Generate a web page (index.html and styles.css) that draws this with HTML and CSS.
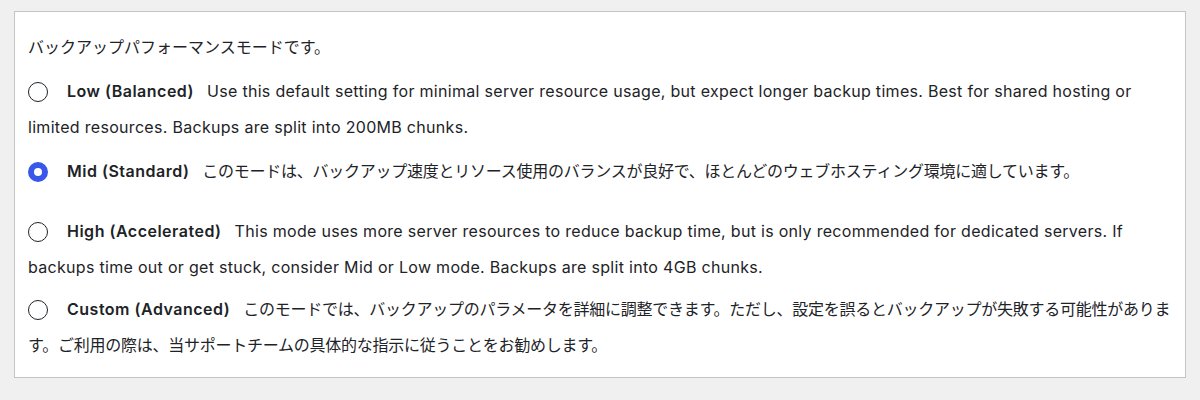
FILE: index.html
```html
<!DOCTYPE html>
<html lang="ja">
<head>
<meta charset="utf-8">
<link rel="stylesheet" href="styles.css">
</head>
<body>
<div class="panel">
  <p class="intro">バックアップパフォーマンスモードです。</p>
  <label class="opt en"><input type="radio" name="mode" class="radio"><strong class="name">Low (Balanced)</strong>Use this default setting for minimal server resource usage, but expect longer backup times. Best for shared hosting or limited resources. Backups are split into 200MB chunks.</label>
  <label class="opt ja opt-spaced"><input type="radio" name="mode" class="radio" checked><strong class="name">Mid (Standard)</strong>このモードは、バックアップ速度とリソース使用のバランスが良好で、ほとんどのウェブホスティング環境に適しています。</label>
  <label class="opt en"><input type="radio" name="mode" class="radio"><strong class="name">High (Accelerated)</strong>This mode uses more server resources to reduce backup time, but is only recommended for dedicated servers. If backups time out or get stuck, consider Mid or Low mode. Backups are split into 4GB chunks.</label>
  <label class="opt ja opt-last"><input type="radio" name="mode" class="radio"><strong class="name">Custom (Advanced)</strong>このモードでは、バックアップのパラメータを詳細に調整できます。ただし、設定を誤るとバックアップが失敗する可能性があります。ご利用の際は、当サポートチームの具体的な指示に従うことをお勧めします。</label>
</div>
</body>
</html>
```

FILE: styles.css
```css
html, body {
  margin: 0;
  padding: 0;
  background: #f0f0f1;
}
body {
  font-family: Inter, "Noto Sans CJK JP", sans-serif;
  font-size: 16px;
  color: #1d2327;
}
.panel {
  margin: 11px 0 0 14px;
  width: 1144px;
  background: #fff;
  border: 1px solid #c3c4c7;
  padding: 17px 13px 14px 13px;
}
.intro {
  margin: 0;
  line-height: 36px;
}
.opt {
  display: block;
  margin-top: 8px;
  line-height: 36px;
}
.opt-spaced {
  margin-bottom: 24px;
}
.opt-last {
  margin-top: 6px;
}
.radio {
  -webkit-appearance: none;
  appearance: none;
  width: 20px;
  height: 20px;
  box-sizing: border-box;
  border: 1px solid #1d2327;
  border-radius: 50%;
  margin: 0 19px 0 0;
  vertical-align: -5px;
  background: #fff;
}
.radio:checked {
  border: 6px solid #3858e9;
}
.en {
  letter-spacing: 0.3px;
}
.ja {
  letter-spacing: -0.25px;
}
.name {
  font-weight: 600;
  letter-spacing: 0.5px;
  margin-right: 13px;
}
```
